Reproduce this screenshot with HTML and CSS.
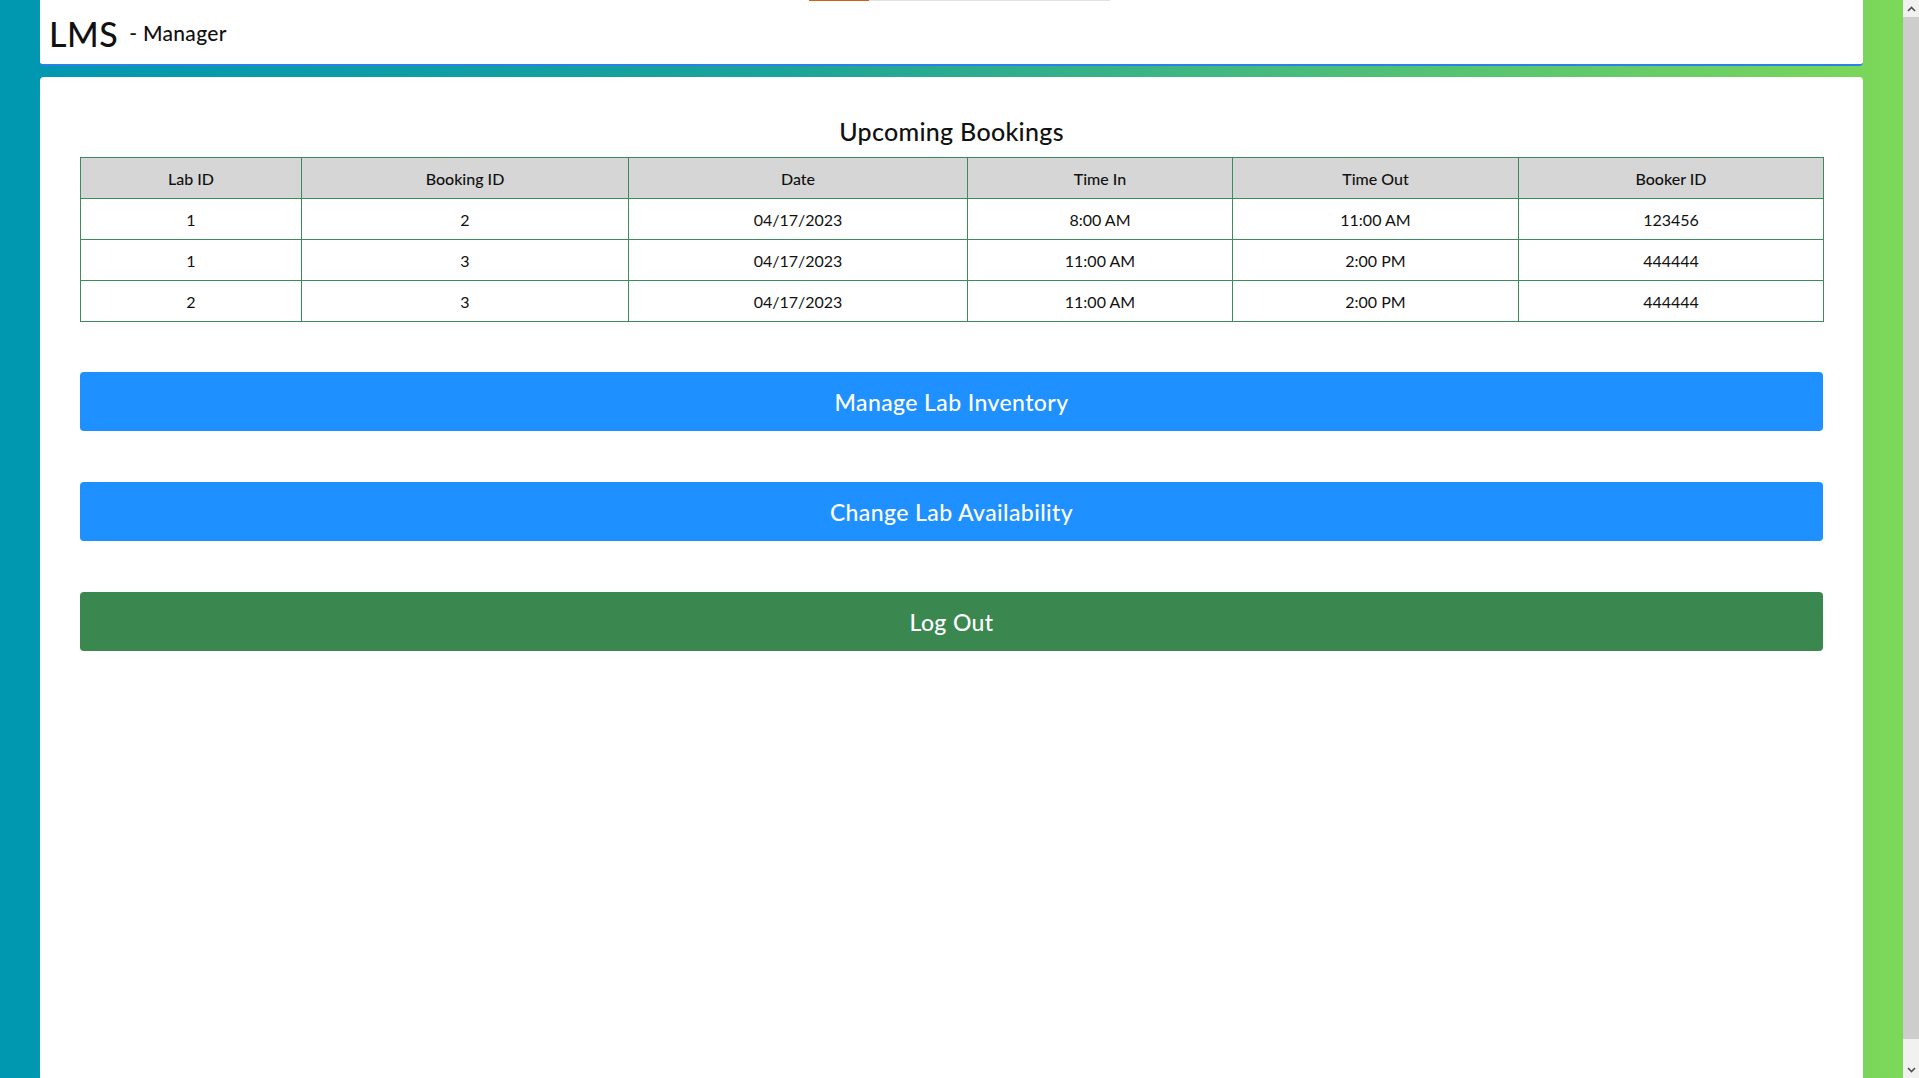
FILE: index.html
```html
<!DOCTYPE html>
<html lang="en">
<head>
<meta charset="utf-8">
<title>LMS - Manager</title>
<link rel="stylesheet" href="styles.css">
</head>
<body>
<div class="loader"><span class="loader-fill"></span></div>
<header class="topbar">
  <span class="brand">LMS</span>
  <span class="role">- Manager</span>
</header>
<main class="card">
  <h2 class="title">Upcoming Bookings</h2>
  <table class="bookings">
    <colgroup>
      <col class="c1"><col class="c2"><col class="c3"><col class="c4"><col class="c5"><col class="c6">
    </colgroup>
    <thead>
      <tr><th>Lab ID</th><th>Booking ID</th><th>Date</th><th>Time In</th><th>Time Out</th><th>Booker ID</th></tr>
    </thead>
    <tbody>
      <tr><td>1</td><td>2</td><td>04/17/2023</td><td>8:00 AM</td><td>11:00 AM</td><td>123456</td></tr>
      <tr><td>1</td><td>3</td><td>04/17/2023</td><td>11:00 AM</td><td>2:00 PM</td><td>444444</td></tr>
      <tr><td>2</td><td>3</td><td>04/17/2023</td><td>11:00 AM</td><td>2:00 PM</td><td>444444</td></tr>
    </tbody>
  </table>
  <div class="actions">
    <button class="btn btn-blue">Manage Lab Inventory</button>
    <button class="btn btn-blue">Change Lab Availability</button>
    <button class="btn btn-green">Log Out</button>
  </div>
</main>
<div class="scrollbar" aria-hidden="true">
  <span class="sb-arrow">
    <svg width="9" height="6" viewBox="0 0 9 6"><path d="M1 5 L4.5 1.5 L8 5" fill="none" stroke="#505050" stroke-width="1.6"/></svg>
  </span>
  <span class="sb-thumb"></span>
  <span class="sb-rest"></span>
  <span class="sb-arrow">
    <svg width="9" height="6" viewBox="0 0 9 6"><path d="M1 1 L4.5 4.5 L8 1" fill="none" stroke="#505050" stroke-width="1.6"/></svg>
  </span>
</div>
</body>
</html>
```
FILE: styles.css
```css
html {
  height: 100%;
  overflow: hidden;
}
body {
  margin: 0;
  padding: 0 56px 0 40px;
  font-family: "Lato", "Noto Sans", sans-serif;
  color: #111;
  min-height: 100%;
  background: linear-gradient(to right, #0097b2 0%, #1aa39a 40%, #7ed957 100%);
}
.loader {
  position: absolute;
  top: 0;
  left: 809px;
  width: 301px;
  height: 1px;
  background: #e2e2e2;
}
.loader-fill {
  display: block;
  width: 60px;
  height: 1px;
  background: #d0601c;
}
.topbar {
  height: 64px;
  background: #fff;
  border-bottom: 2px solid #2b80ea;
  border-radius: 0 0 4px 4px;
  display: flex;
  align-items: center;
  padding-left: 9px;
  margin-bottom: 11px;
}
.brand {
  font-size: 34px;
  font-weight: 500;
  letter-spacing: 0.5px;
  margin-right: 11px;
  margin-top: 2px;
}
.role {
  font-size: 21px;
  font-weight: 500;
  letter-spacing: 0.3px;
}
.card {
  background: #fff;
  border-radius: 4px;
  min-height: 1023px;
  padding: 40px 40px 0;
}
.title {
  margin: 0 0 12px;
  text-align: center;
  font-size: 25px;
  font-weight: 500;
  line-height: 28px;
  letter-spacing: 0.3px;
}
.bookings {
  width: 100%;
  border-collapse: collapse;
  table-layout: fixed;
  font-size: 16px;
}
.c1 { width: 221px; }
.c2 { width: 327px; }
.c3 { width: 339px; }
.c4 { width: 265px; }
.c5 { width: 286px; }
.c6 { width: 305px; }
.bookings th,
.bookings td {
  border: 1px solid #3d8a5c;
  height: 40px;
  padding: 0;
  text-align: center;
  vertical-align: middle;
}
.bookings th {
  background: #d6d6d6;
  font-weight: 500;
}
.bookings td {
  font-weight: 400;
}
.actions {
  display: flex;
  flex-direction: column;
  gap: 51px;
  margin-top: 50px;
}
.btn {
  height: 59px;
  border: none;
  border-radius: 4px;
  color: #fff;
  font-family: inherit;
  font-size: 23px;
  font-weight: 500;
  letter-spacing: 0.4px;
  cursor: pointer;
}
.btn-blue { background: #1e90ff; }
.btn-green { background: #3a874f; }
.scrollbar {
  position: fixed;
  top: 0;
  right: 0;
  width: 16px;
  height: 100%;
  background: #f1f1f1;
  display: flex;
  flex-direction: column;
}
.sb-arrow {
  height: 17px;
  display: flex;
  align-items: center;
  justify-content: center;
  flex: none;
}
.sb-thumb {
  height: 1022px;
  background: #cdcdcd;
  flex: none;
}
.sb-rest {
  flex: 1;
}
```
